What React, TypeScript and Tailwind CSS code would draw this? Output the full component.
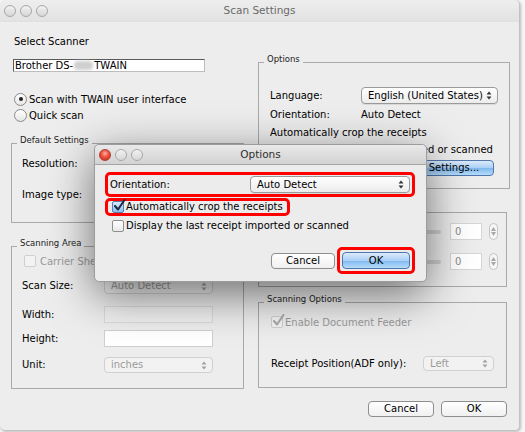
import React from "react";

const FONT = "[font-family:'DejaVu_Sans',Verdana,sans-serif]";

function Lights({ active }: { active?: boolean }) {
  return (
    <div className="flex items-center gap-[4px]">
      <span
        className={
          active
            ? "w-[12px] h-[12px] rounded-full border border-[#b23a30] bg-[radial-gradient(circle_at_50%_35%,#ffb0a0_0%,#f0503c_45%,#c0281c_100%)]"
            : "w-[12px] h-[12px] rounded-full border border-[#a8a8a8] bg-[linear-gradient(#f2f2f2,#d6d6d6)]"
        }
      />
      <span className="w-[12px] h-[12px] rounded-full border border-[#a8a8a8] bg-[linear-gradient(#f2f2f2,#d6d6d6)]" />
      <span className="w-[12px] h-[12px] rounded-full border border-[#a8a8a8] bg-[linear-gradient(#f2f2f2,#d6d6d6)]" />
    </div>
  );
}

function Arrows({ light }: { light?: boolean }) {
  const c = light ? "#a0a0a0" : "#333";
  return (
    <svg width="6" height="9" viewBox="0 0 6 9" className="shrink-0">
      <path d="M3 0.5 L5.5 3.5 L0.5 3.5 Z" fill={c} />
      <path d="M3 8.5 L5.5 5.5 L0.5 5.5 Z" fill={c} />
    </svg>
  );
}

function Select({
  text,
  disabled,
  className,
}: {
  text: string;
  disabled?: boolean;
  className: string;
}) {
  return (
    <div
      className={
        "flex items-center justify-between whitespace-nowrap rounded-[4px] border pl-[6px] pr-[5px] " +
        (disabled
          ? "border-[#d0d0d0] bg-[#f2f2f2] text-[#9a9a9a] "
          : "border-[#9a9a9a] bg-[linear-gradient(#ffffff,#ececec)] text-black shadow-[0_1px_0_rgba(0,0,0,0.08)] ") +
        className
      }
    >
      <span className="leading-[12px]">{text}</span>
      <Arrows light={disabled} />
    </div>
  );
}

function Check({ checked, disabled }: { checked?: boolean; disabled?: boolean }) {
  return (
    <span
      className={
        "relative shrink-0 w-[12px] h-[12px] rounded-[2px] border " +
        (disabled
          ? "border-[#cfcfcf] bg-[#f3f3f3]"
          : checked
          ? "border-[#5a7fb0] bg-[linear-gradient(#d9ebfd,#8dbff2)]"
          : "border-[#8f8f8f] bg-[linear-gradient(#ffffff,#e8e8e8)]")
      }
    >
      {checked && (
        <svg
          width="13"
          height="13"
          viewBox="0 0 13 13"
          className="absolute left-[0px] top-[-3px]"
        >
          <path
            d="M2 7 L5 10.5 L11.5 1"
            fill="none"
            stroke={disabled ? "#a8a8a8" : "#1c2a44"}
            strokeWidth="2"
            strokeLinecap="round"
            strokeLinejoin="round"
          />
        </svg>
      )}
    </span>
  );
}

function Group({
  label,
  className,
  children,
}: {
  label?: string;
  className: string;
  children?: React.ReactNode;
}) {
  return (
    <div className={"relative border border-[#a9a9a9] " + className}>
      {label && (
        <span className="absolute left-[5px] top-[-10px] bg-[#ededed] px-[3px] text-[8.5px] leading-[12px] text-[#222]">
          {label}
        </span>
      )}
      {children}
    </div>
  );
}

function Button({
  text,
  blue,
  className,
}: {
  text: string;
  blue?: boolean;
  className: string;
}) {
  return (
    <div
      className={
        "flex items-center justify-center whitespace-nowrap rounded-[4px] border leading-[12px] " +
        (blue
          ? "border-[#4f77ad] bg-[linear-gradient(#dcebfb_0%,#a9d0f6_50%,#7fb8ef_51%,#b6dcfa_100%)] "
          : "border-[#8e8e8e] bg-[linear-gradient(#ffffff,#f0f0f0)] ") +
        className
      }
    >
      {text}
    </div>
  );
}

function Stepper() {
  return (
    <div className="w-[9px] h-[17px] rounded-full border border-[#c4c4c4] bg-[#f6f6f6] flex flex-col items-center justify-center gap-[1px]">
      <svg width="5" height="4" viewBox="0 0 5 4">
        <path d="M2.5 0 L5 4 L0 4 Z" fill="#a8a8a8" />
      </svg>
      <svg width="5" height="4" viewBox="0 0 5 4">
        <path d="M2.5 4 L5 0 L0 0 Z" fill="#a8a8a8" />
      </svg>
    </div>
  );
}

export default function App() {
  return (
    <div className={"relative w-[525px] h-[432px] overflow-hidden whitespace-nowrap bg-[#f7f7f7] text-[10px] text-black " + FONT}>
      {/* main window */}
      <div className="w-[520px] h-[431px] rounded-[5px] bg-[#ededed] border-r border-b border-[#c2c2c2] shadow-[1px_1px_3px_rgba(0,0,0,0.25)] flex flex-col">
        {/* title bar */}
        <div className="relative h-[21px] shrink-0 rounded-t-[5px] bg-[linear-gradient(#eeeeee,#e2e2e2)] flex items-center pl-[4px]">
          <Lights />
          <div className="absolute inset-0 flex items-center justify-center text-[10.5px] text-[#6a6a6a]">
            Scan Settings
          </div>
        </div>
        <div className="h-[1px] bg-[#e0e0e0]" />

        <div className="flex pl-[11px]">
          {/* left column */}
          <div className="w-[233px] flex flex-col">
            <div className="mt-[13px] pl-[3px] leading-[14px]">Select Scanner</div>
            <div className="mt-[10px] ml-[2px] w-[192px] h-[13px] border border-[#5a5a5a] border-b-[#bdbdbd] border-r-[#bdbdbd] bg-white flex items-center pl-[1px] leading-[11px]">
              <span>Brother DS-</span>
              <span className="inline-block w-[19px] h-[9px] rounded-[4px] bg-[#cfcfcf] blur-[1.5px] mx-[1px]" />
              <span>TWAIN</span>
            </div>
            <div className="mt-[19px] flex flex-col pl-[3px]">
              <div className="h-[16px] flex items-center gap-[2px]">
                <span className="w-[13px] h-[13px] rounded-full border border-[#8a8a8a] bg-[linear-gradient(#ffffff,#e6e6e6)] flex items-center justify-center">
                  <span className="w-[4px] h-[4px] rounded-full bg-[#222]" />
                </span>
                <span>Scan with TWAIN user interface</span>
              </div>
              <div className="h-[16px] flex items-center gap-[2px]">
                <span className="w-[13px] h-[13px] rounded-full border border-[#8a8a8a] bg-[linear-gradient(#ffffff,#e6e6e6)]" />
                <span>Quick scan</span>
              </div>
            </div>

            <Group label="Default Settings" className="mt-[20px] h-[80px] pl-[10px]">
              <div className="mt-[13px] leading-[14px]">Resolution:</div>
              <div className="mt-[17px] leading-[14px]">Image type:</div>
            </Group>

            <Group label="Scanning Area" className="mt-[23px] h-[143px] pl-[10px]">
              <div className="mt-[7px] h-[14px] flex items-center gap-[4px] pl-[2px] text-[#9a9a9a]">
                <Check disabled />
                <span>Carrier Sheet</span>
              </div>
              <div className="mt-[10px] flex items-center">
                <span className="w-[82px] leading-[14px]">Scan Size:</span>
                <Select text="Auto Detect" disabled className="w-[109px] h-[16px]" />
              </div>
              <div className="mt-[12px] flex items-center">
                <span className="w-[82px] leading-[14px]">Width:</span>
                <div className="w-[109px] h-[17px] border border-[#dadada] bg-[#f0f0f0]" />
              </div>
              <div className="mt-[7px] flex items-center">
                <span className="w-[82px] leading-[14px]">Height:</span>
                <div className="w-[109px] h-[17px] border border-[#cfcfcf] bg-white" />
              </div>
              <div className="mt-[10px] flex items-center">
                <span className="w-[82px] leading-[14px]">Unit:</span>
                <Select text="inches" disabled className="w-[109px] h-[16px]" />
              </div>
            </Group>
          </div>

          {/* right column */}
          <div className="ml-[14px] w-[252px] flex flex-col">
            <Group label="Options" className="mt-[40px] h-[127px] w-[252px] pl-[11px]">
              <div className="mt-[24px] flex items-center">
                <span className="w-[91px] leading-[14px]">Language:</span>
                <Select text="English (United States)" className="w-[137px] h-[17px]" />
              </div>
              <div className="mt-[3px] flex items-center leading-[16px]">
                <span className="w-[91px]">Orientation:</span>
                <span>Auto Detect</span>
              </div>
              <div className="mt-[2px] leading-[16px]">Automatically crop the receipts</div>
              <div className="mt-[1px] leading-[16px]">Display the last receipt imported or scanned</div>
              <div className="mt-[2px] flex justify-end pr-[15px]">
                <Button text="Settings..." blue className="w-[80px] h-[16px]" />
              </div>
            </Group>

            <Group label="Margins" className="mt-[23px] h-[75px] w-[249px]">
              <div className="mt-[10px] flex items-center">
                <div className="ml-[10px] w-[172px] h-[4px] rounded-full bg-[#cfcfcf]" />
                <div className="ml-[9px] w-[32px] h-[17px] border border-[#d6d6d6] bg-white pl-[4px] text-[#8a8a8a] flex items-center">0</div>
                <div className="ml-[7px]"><Stepper /></div>
              </div>
              <div className="mt-[13px] flex items-center">
                <div className="ml-[10px] w-[172px] h-[4px] rounded-full bg-[#cfcfcf]" />
                <div className="ml-[9px] w-[32px] h-[17px] border border-[#d6d6d6] bg-white pl-[4px] text-[#8a8a8a] flex items-center">0</div>
                <div className="ml-[7px]"><Stepper /></div>
              </div>
            </Group>

            <Group label="Scanning Options" className="mt-[15px] h-[86px] w-[249px] pl-[12px]">
              <div className="mt-[12px] h-[14px] flex items-center gap-[2px] text-[#9a9a9a]">
                <Check checked disabled />
                <span>Enable Document Feeder</span>
              </div>
              <div className="mt-[27px] flex items-center">
                <span className="w-[152px] leading-[14px]">Receipt Position(ADF only):</span>
                <Select text="Left" disabled className="w-[71px] h-[15px]" />
              </div>
            </Group>
          </div>
        </div>

        <div className="mt-[12px] flex justify-end gap-[7px] pr-[12px]">
          <Button text="Cancel" className="w-[66px] h-[16px]" />
          <Button text="OK" className="w-[66px] h-[16px]" />
        </div>
      </div>

      {/* Options dialog (sheet) */}
      <div className="absolute left-[94px] top-[144px] w-[333px] h-[138px] rounded-[5px] bg-[#ececec] border border-[#9c9c9c] shadow-[0_12px_45px_rgba(0,0,0,0.55)] flex flex-col">
        <div className="relative h-[20px] shrink-0 rounded-t-[5px] bg-[linear-gradient(#e9e9e9,#d2d2d2)] border-b border-[#a5a5a5] flex items-center pl-[4px]">
          <Lights active />
          <div className="absolute inset-0 flex items-center justify-center text-[10.5px] text-[#2e2e2e]">
            Options
          </div>
        </div>
        <div className="pl-[10px] pr-[11px] flex flex-col">
          <div className="mt-[7px] h-[25px] rounded-[5px] border-[3px] border-[#ff0000] flex items-center justify-between pl-[2px] pr-[2px]">
            <span className="leading-[14px]">Orientation:</span>
            <Select text="Auto Detect" className="w-[160px] h-[17px]" />
          </div>
          <div className="mt-[1px] self-start w-[185px] h-[18px] rounded-[5px] border-[3px] border-[#ff0000] flex items-center gap-[2px] pl-[4px]">
            <Check checked />
            <span className="leading-[14px]">Automatically crop the receipts</span>
          </div>
          <div className="mt-[3px] h-[14px] flex items-center gap-[2px] pl-[7px]">
            <Check />
            <span className="leading-[14px]">Display the last receipt imported or scanned</span>
          </div>
          <div className="mt-[14px] flex justify-end items-center gap-[2px]">
            <Button text="Cancel" className="w-[64px] h-[16px]" />
            <div className="rounded-[5px] border-[3px] border-[#ff0000] p-[2px]">
              <Button text="OK" blue className="w-[68px] h-[17px]" />
            </div>
          </div>
        </div>
      </div>
    </div>
  );
}
